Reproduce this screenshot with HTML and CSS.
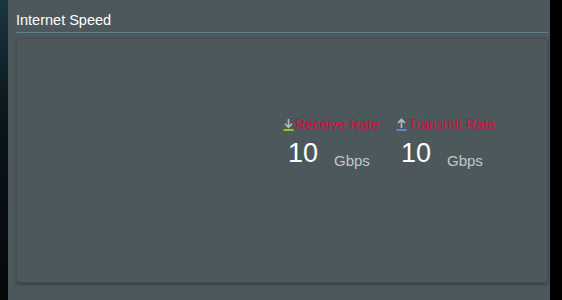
FILE: index.html
```html
<!DOCTYPE html>
<html>
    <head>
        <meta charset="utf-8">
        <title>Internet Speed</title>
        <link rel="stylesheet" href="styles.css">
    </head>
    <body>
    <div class="page">
        <div class="side"></div>
        <div class="panel">
            <div class="title">Internet Speed</div>
            <div class="divider"></div>
            <div class="box">
                <div class="chart"></div>
                <div class="rates">
                    <div class="rate">
                        <div class="rate-label">
                            <svg class="arrow" width="11" height="13" viewBox="0 0 11 13">
                                <path d="M5.5 1 V9 M2 5.8 L5.5 9.3 L9 5.8" stroke="#b4bcc0" stroke-width="1.6" fill="none"/>
                                <rect x="0.5" y="11" width="10" height="2" fill="#7ed321"/>
                            </svg>
                            <span>Receive Rate</span>
                        </div>
                        <div class="rate-value"><span class="num">10</span><span class="unit">Gbps</span></div>
                    </div>
                    <div class="rate">
                        <div class="rate-label">
                            <svg class="arrow" width="11" height="13" viewBox="0 0 11 13">
                                <path d="M5.5 10 V1.5 M2 5 L5.5 1.5 L9 5" stroke="#b4bcc0" stroke-width="1.6" fill="none"/>
                                <rect x="0.5" y="11" width="10" height="2" fill="#4a90e2"/>
                            </svg>
                            <span>Transmit Rate</span>
                        </div>
                        <div class="rate-value"><span class="num">10</span><span class="unit">Gbps</span></div>
                    </div>
                </div>
            </div>
        </div>
    </div>
    </body>
</html>
```

FILE: styles.css
```css
body {
    margin: 0;
    background-color: #000000;
    font-family: "Liberation Sans", Arial, sans-serif;
}
.page {
    display: flex;
    height: 300px;
}
.side {
    width: 8px;
    background: linear-gradient(180deg, #1a3640 0%, #0a151a 40%, #06080a 100%);
}
.panel {
    width: 542px;
    background-color: #4d585d;
    padding: 0 2px 0 8px;
    box-sizing: border-box;
}
.title {
    color: #ffffff;
    font-size: 14.5px;
    height: 32px;
    line-height: 40px;
}
.divider {
    height: 1px;
    background-color: #5e7f93;
    margin-bottom: 5px;
}
.box {
    display: grid;
    grid-template-columns: 266px 1fr;
    height: 245px;
    border: 1px solid #434e53;
    border-radius: 4px;
    box-sizing: border-box;
    box-shadow: 0 2px 3px rgba(0, 0, 0, 0.25);
}
.rates {
    display: flex;
    gap: 13px;
    padding-top: 77px;
}
.rate {
    width: 100px;
}
.rate-label {
    display: flex;
    align-items: center;
    gap: 1px;
    color: #d0103a;
    font-size: 14px;
    height: 16px;
    white-space: nowrap;
}
.arrow {
    display: block;
}
.rate-value {
    margin-top: 6px;
    padding-left: 5px;
    white-space: nowrap;
}
.num {
    display: inline-block;
    color: #ffffff;
    font-size: 27px;
    width: 46px;
}
.unit {
    color: #c0c8cc;
    font-size: 15px;
    vertical-align: -4px;
}
```
